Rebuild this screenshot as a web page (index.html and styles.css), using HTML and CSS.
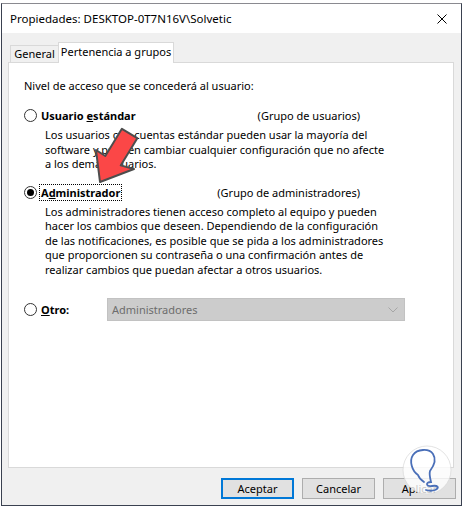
FILE: index.html
```html
<!DOCTYPE html>
<html lang="es">
<head>
    <meta charset="UTF-8">
    <meta name="viewport" content="width=device-width, initial-scale=1.0">
    <title>Propiedades: DESKTOP-0T7N16V\Solvetic</title>
    <link rel="stylesheet" href="styles.css">
</head>
<body>
    <div class="window">
        <div class="titlebar">
            <span class="title">Propiedades: DESKTOP-0T7N16V\Solvetic</span>
            <svg class="close" width="10" height="10" viewBox="0 0 10 10">
                <path d="M0.5 0.5 L9.5 9.5 M9.5 0.5 L0.5 9.5" stroke="#000" stroke-width="1"/>
            </svg>
        </div>
        <div class="dialog">
            <div class="tabs">
                <div class="tab">General</div>
                <div class="tab active">Pertenencia a grupos</div>
            </div>
            <div class="panel">
                <p class="intro">Nivel de acceso que se concederá al usuario:</p>

                <div class="option first">
                    <div class="option-head">
                        <span class="radio"></span>
                        <span class="name">Usuario <u>e</u>stándar</span>
                        <span class="group">(Grupo de usuarios)</span>
                    </div>
                    <p class="desc">Los usuarios con cuentas estándar pueden usar la mayoría del<br>software y pueden cambiar cualquier configuración que no afecte<br>a los demas usuarios.</p>
                </div>

                <div class="option">
                    <div class="option-head">
                        <span class="radio checked"></span>
                        <span class="name focused">A<u>d</u>ministrador</span>
                        <span class="group">(Grupo de administradores)</span>
                    </div>
                    <p class="desc">Los administradores tienen acceso completo al equipo y pueden<br>hacer los cambios que deseen. Dependiendo de la configuración<br>de las notificaciones, es posible que se pida a los administradores<br>que proporcionen su contraseña o una confirmación antes de<br>realizar cambios que puedan afectar a otros usuarios.</p>
                </div>

                <div class="other">
                    <span class="radio"></span>
                    <span class="name other-name"><u>O</u>tro:</span>
                    <div class="combo">
                        <span>Administradores</span>
                        <svg width="10" height="6" viewBox="0 0 10 6">
                            <path d="M0.5 0.5 L5 5 L9.5 0.5" fill="none" stroke="#a6a6a6" stroke-width="1"/>
                        </svg>
                    </div>
                </div>
            </div>
            <div class="buttons">
                <button class="btn default">Aceptar</button>
                <button class="btn">Cancelar</button>
                <button class="btn">Aplicar</button>
            </div>
        </div>
    </div>

    <!-- red pointer over the screenshot -->
    <svg class="pointer" width="52" height="66" viewBox="0 0 52 66">
        <polygon points="10,60 44,47 30.7,43.4 47.3,16.2 31.9,6.8 15.3,34 6,28" fill="#fb4747" stroke="#4d4d4d" stroke-width="2" stroke-linejoin="round"/>
    </svg>

    <!-- watermark logo -->
    <svg class="logo" width="50" height="50" viewBox="0 0 50 50">
        <circle cx="25" cy="25" r="24" fill="rgba(255,255,255,0.78)" stroke="rgba(215,215,215,0.7)" stroke-width="1"/>
        <path d="M16,30 C10,26 7,16 11,10 C15,4 27,3 31,9 C35,15 31,22 28,26 C27,29 28,33 29,37 C23,37 24,42 30,41 C36,40 38,43 33,45 C30,46 27,46 24,45 M16,30 C17,33 19,35 22,37" fill="none" stroke="#4a6fb8" stroke-width="1.8" stroke-linecap="round"/>
    </svg>
</body>
</html>
```

FILE: styles.css
```css
* {
    box-sizing: border-box;
}
body {
    margin: 0;
    background-color: #ffffff;
    font-family: "Noto Sans", "Liberation Sans", sans-serif;
    font-size: 11px;
    color: #000000;
}
.window {
    margin: 3px 0 0 1px;
    width: 461px;
    height: 503px;
    border: 1px solid #3a4150;
    border-top-color: #8a8a90;
    background-color: #f0f0f0;
    display: flex;
    flex-direction: column;
}
.titlebar {
    height: 29px;
    background-color: #ffffff;
    display: flex;
    align-items: center;
    padding: 0 14px 0 8px;
}
.title {
    flex: 1;
    font-size: 11.5px;
}
.dialog {
    padding: 9px 7px 0 6px;
    flex: 1;
    display: flex;
    flex-direction: column;
}
.tabs {
    display: flex;
    align-items: flex-end;
    height: 21px;
    padding-left: 2px;
    border-bottom: 1px solid #d9d9d9;
}
.tab {
    height: 17px;
    border: 1px solid #d9d9d9;
    border-bottom: none;
    background-color: #f0f0f0;
    line-height: 16px;
    width: 49px;
    text-align: center;
    white-space: nowrap;
}
.tab.active {
    width: 116px;
    height: 21px;
    margin-left: -1px;
    margin-bottom: -1px;
    background-color: #ffffff;
    line-height: 17px;
}
.panel {
    height: 405px;
    background-color: #ffffff;
    border: 1px solid #d9d9d9;
    border-top: none;
    padding: 15px 0 0 15px;
}
p {
    margin: 0;
}
.intro {
    line-height: 15px;
}
.option {
    margin-top: 12px;
}
.option.first {
    margin-top: 14px;
}
.option-head {
    display: flex;
    align-items: center;
    width: 336px;
    height: 17px;
}
.radio {
    width: 13px;
    height: 13px;
    border: 1px solid #333333;
    border-radius: 50%;
    background-color: #ffffff;
    display: flex;
    align-items: center;
    justify-content: center;
    flex-shrink: 0;
}
.radio.checked::after {
    content: "";
    width: 7px;
    height: 7px;
    border-radius: 50%;
    background-color: #000000;
}
.name {
    font-weight: bold;
    margin-left: 3px;
    padding: 0 1px;
    line-height: 15px;
}
.name.focused {
    outline: 1px dotted #000000;
}
.group {
    margin-left: auto;
}
.desc {
    margin: 4px 0 0 21px;
    line-height: 14.5px;
    white-space: nowrap;
}
.other {
    display: flex;
    align-items: center;
    margin-top: 21px;
    height: 23px;
}
.other-name {
    width: 67px;
}
.combo {
    width: 298px;
    height: 23px;
    background-color: #cccccc;
    border: 1px solid #c2c2c2;
    display: flex;
    align-items: center;
    justify-content: space-between;
    padding: 0 6px 0 4px;
    color: #6d6d6d;
}
.buttons {
    display: flex;
    justify-content: flex-end;
    gap: 8px;
    margin-top: 10px;
    margin-right: -2px;
}
.btn {
    width: 73px;
    height: 21px;
    font-family: inherit;
    font-size: 11px;
    color: #000000;
    background-color: #e1e1e1;
    border: 1px solid #adadad;
    padding: 0;
}
.btn.default {
    border: 2px solid #0078d7;
}
.pointer {
    position: absolute;
    left: 90px;
    top: 122px;
}
.logo {
    position: absolute;
    left: 402px;
    top: 445px;
}
```
